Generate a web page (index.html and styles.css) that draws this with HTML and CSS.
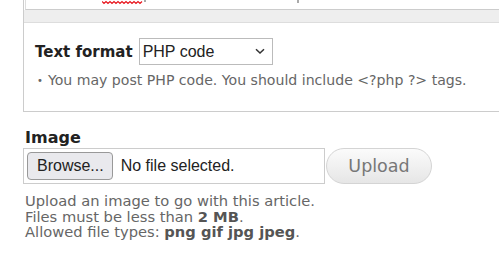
FILE: index.html
```html
<!DOCTYPE html>
<html>
<head>
<meta charset="utf-8">
<link rel="stylesheet" href="styles.css">
</head>
<body>
<div class="page">
  <div class="format-box">
    <div class="textarea-end">
      <svg class="squiggle" width="42" height="5" viewBox="0 0 42 5"><path d="M0 1.5 L2 3.5 L4 1.5 L6 3.5 L8 1.5 L10 3.5 L12 1.5 L14 3.5 L16 1.5 L18 3.5 L20 1.5 L22 3.5 L24 1.5 L26 3.5 L28 1.5 L30 3.5 L32 1.5 L34 3.5 L36 1.5 L38 3.5 L40 1.5" fill="none" stroke="#e8141c" stroke-width="1.2"/></svg>
      <span class="desc-mark one"></span>
      <span class="desc-mark two"></span>
    </div>
    <div class="grippie"></div>
    <div class="filter">
      <div class="format-row">
        <label class="format-label">Text format</label>
        <div class="select">
          <span>PHP code</span>
          <svg width="10" height="7" viewBox="0 0 10 7"><path d="M1 1.2 L5 5 L9 1.2" fill="none" stroke="#333" stroke-width="1.5"/></svg>
        </div>
      </div>
      <ul class="tips"><li>You may post PHP code. You should include &lt;?php ?&gt; tags.</li></ul>
    </div>
  </div>

  <div class="image-field">
    <div class="field-label">Image</div>
    <div class="upload-row">
      <div class="file-input">
        <span class="browse">Browse...</span>
        <span class="nofile">No file selected.</span>
      </div>
      <span class="upload-btn">Upload</span>
    </div>
    <div class="help">
      Upload an image to go with this article.<br>
      Files must be less than <strong>2 MB</strong>.<br>
      Allowed file types: <strong>png gif jpg jpeg</strong>.
    </div>
  </div>
</div>
</body>
</html>
```

FILE: styles.css
```css
html, body {
  margin: 0;
  padding: 0;
  background: #fff;
}
body {
  font-family: "DejaVu Sans", sans-serif;
  color: #333;
  overflow: hidden;
}
.page {
  padding-left: 23px;
}
.format-box {
  border-left: 1px solid #ccc;
  border-bottom: 1px solid #ccc;
  width: 500px;
  height: 112px;
  box-sizing: border-box;
}
.textarea-end {
  position: relative;
  height: 9px;
  border-bottom: 1px solid #ccc;
  margin-left: 1px;
  border-left: 1px solid #ddd;
}
.squiggle {
  position: absolute;
  left: 76px;
  top: 0;
}
.desc-mark {
  position: absolute;
  top: 0;
  width: 2px;
  height: 3px;
  background: #aaa;
}
.desc-mark.one { left: 118px; height: 2px; }
.desc-mark.two { left: 271px; }
.grippie {
  height: 12px;
  background: #eee;
  border-bottom: 1px solid #ddd;
}
.filter {
  padding: 15px 0 0 11px;
}
.format-row {
  display: flex;
  align-items: center;
  gap: 6px;
}
.format-label {
  font-weight: bold;
  font-size: 15px;
  color: #222;
}
.select {
  width: 134px;
  height: 27px;
  box-sizing: border-box;
  border: 1px solid #bbb;
  display: flex;
  align-items: center;
  justify-content: space-between;
  padding: 0 7px 0 3px;
  font-family: "Liberation Sans", Arial, sans-serif;
  font-size: 16px;
  color: #222;
}
.tips {
  list-style: none;
  margin: 7px 0 0 0;
  padding: 0 0 0 2px;
  font-size: 14.1px;
  color: #666;
}
.tips li::before {
  content: "\2022";
  font-size: 10px;
  margin-right: 5px;
  vertical-align: 1px;
}
.image-field {
  padding-top: 17px;
}
.field-label {
  font-weight: bold;
  font-size: 16px;
  color: #222;
  padding-left: 2px;
  line-height: 18px;
}
.upload-row {
  display: flex;
  align-items: center;
  margin-top: 1px;
}
.file-input {
  width: 302px;
  height: 36px;
  box-sizing: border-box;
  border: 1px solid #ccc;
  display: flex;
  align-items: center;
  padding-left: 3px;
  gap: 8px;
  font-family: "Liberation Sans", Arial, sans-serif;
  font-size: 16px;
  color: #222;
}
.browse {
  height: 28px;
  box-sizing: border-box;
  border: 1px solid #999;
  border-radius: 4px;
  background: #e9e9ed;
  display: flex;
  align-items: center;
  padding: 0 8px 0 9px;
}
.upload-btn {
  margin-left: 1px;
  width: 106px;
  height: 36px;
  box-sizing: border-box;
  border: 1px solid #d4d4d4;
  border-radius: 18px;
  background: linear-gradient(#fbfbfb, #e6e6e6);
  display: flex;
  align-items: center;
  justify-content: center;
  font-size: 17.5px;
  color: #777;
}
.help {
  margin-top: 9px;
  padding-left: 2px;
  font-size: 14.7px;
  line-height: 15.5px;
  color: #666;
}
.help strong {
  color: #555;
}
```
